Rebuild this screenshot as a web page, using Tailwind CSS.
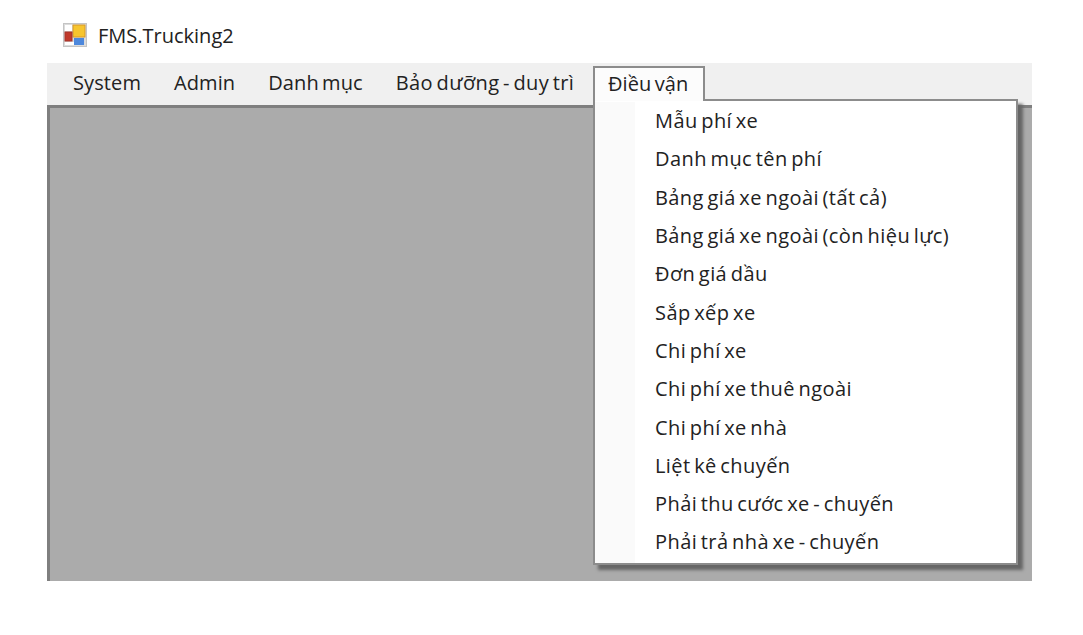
<!DOCTYPE html>
<html><head><meta charset="utf-8"><script src="https://cdn.jsdelivr.net/npm/@tailwindcss/browser@4"></script></head>
<body class="bg-white">
<div class="w-[1083px] h-[635px] bg-white overflow-hidden font-['Open_Sans','Noto_Sans',sans-serif] text-[20px] text-[#222] pl-[47px] pt-[20px] tracking-[0.1px] [word-spacing:-2px]">
  <div class="w-[985px] relative">
    <div class="h-[43px] flex items-start pl-[16px] gap-[11px] pt-[3px]">
      <svg width="24" height="24" viewBox="0 0 24 24" class="shrink-0"><rect x="0.5" y="0.5" width="23" height="23" fill="#dcdcdc" stroke="#c4c4c4"/><rect x="2" y="2" width="7" height="6" fill="#fff"/><rect x="2" y="19" width="9" height="3" fill="#fff"/><rect x="10" y="2" width="12" height="12" fill="#f7c52e" stroke="#d6982a"/><rect x="2" y="9" width="7" height="9" fill="#c0392b" stroke="#a5352b"/><rect x="11" y="15" width="10" height="7" fill="#4d88dc"/></svg>
      <span class="leading-[26px] tracking-normal [word-spacing:0]">FMS.Trucking2</span>
    </div>
    <div class="h-[42px] bg-[#f0f0f0] flex items-center pl-[26px] gap-[33px] pb-[2px]">
      <div>System</div>
      <div>Admin</div>
      <div>Danh mục</div>
      <div class="tracking-[0.4px]">Bảo dưỡng - duy trì</div>
    </div>
    <div class="h-[476px] bg-[#ababab] border-t-[3px] border-l-[3px] border-[#7f7f7f]"></div>
    <div class="absolute left-[546px] top-[46px] w-[112px] h-[35px] bg-[#fcfcfc] border-[2px] border-b-0 border-[#8c8c8c] z-20 pl-[13px] pt-[1px]">Điều vận</div>
    <div class="absolute left-[546px] top-[79px] w-[425px] h-[466px] bg-white border-[2px] border-[#8c8c8c] shadow-[5px_5px_3px_#666] z-10 flex pt-[1px] tracking-[0.42px]">
      <div class="w-[40px] bg-[#fafafa]"></div>
      <div class="flex-1 flex flex-col pl-[20px]">
        <div class="h-[38.3px] flex items-center">Mẫu phí xe</div>
        <div class="h-[38.3px] flex items-center">Danh mục tên phí</div>
        <div class="h-[38.3px] flex items-center">Bảng giá xe ngoài (tất cả)</div>
        <div class="h-[38.3px] flex items-center">Bảng giá xe ngoài (còn hiệu lực)</div>
        <div class="h-[38.3px] flex items-center">Đơn giá dầu</div>
        <div class="h-[38.3px] flex items-center">Sắp xếp xe</div>
        <div class="h-[38.3px] flex items-center">Chi phí xe</div>
        <div class="h-[38.3px] flex items-center">Chi phí xe thuê ngoài</div>
        <div class="h-[38.3px] flex items-center">Chi phí xe nhà</div>
        <div class="h-[38.3px] flex items-center">Liệt kê chuyến</div>
        <div class="h-[38.3px] flex items-center">Phải thu cước xe - chuyến</div>
        <div class="h-[38.3px] flex items-center">Phải trả nhà xe - chuyến</div>
      </div>
    </div>
  </div>
</div>
</body></html>
